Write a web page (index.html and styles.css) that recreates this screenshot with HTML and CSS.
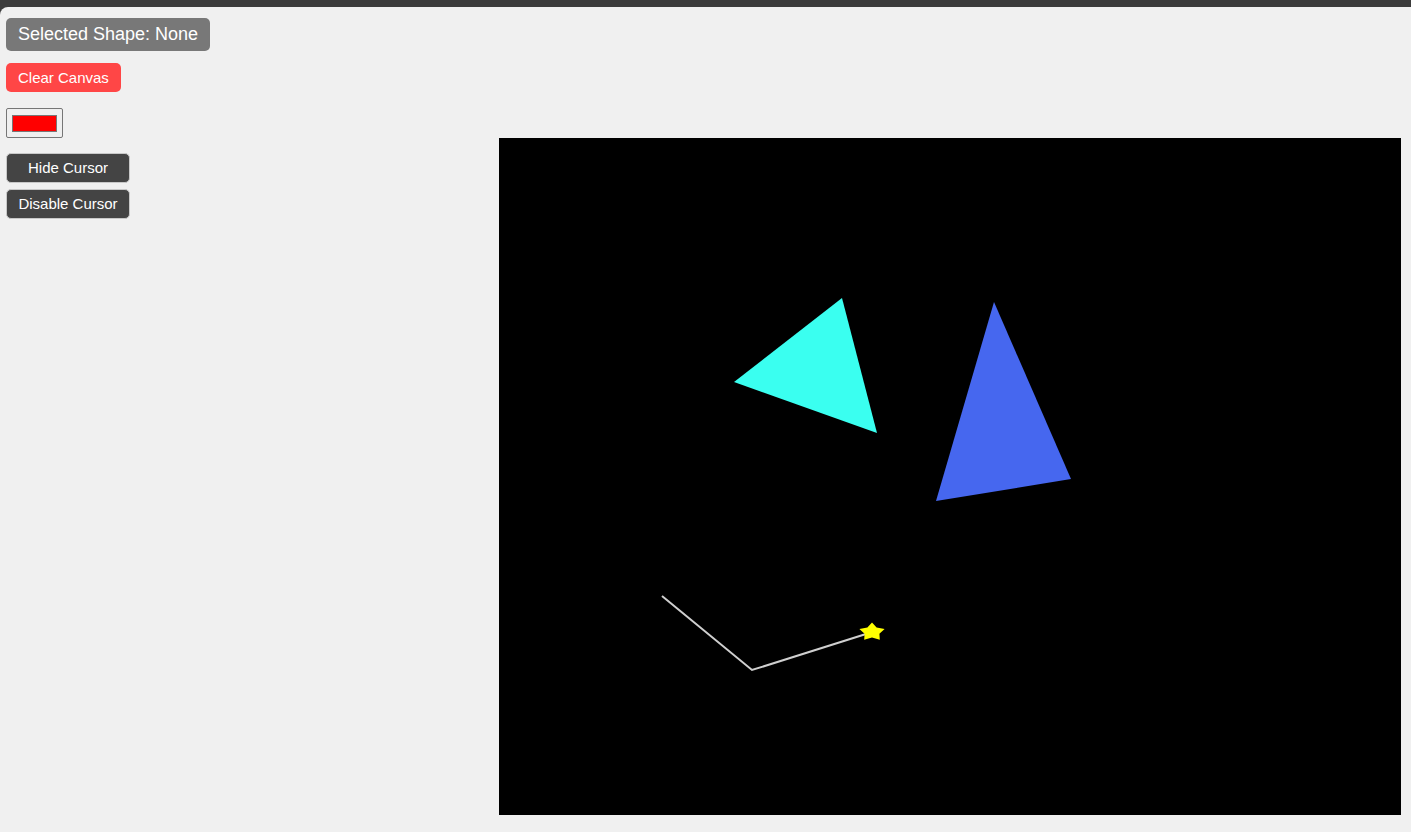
FILE: index.html
```html
<!DOCTYPE html>
<html lang="en">
<head>
<meta charset="utf-8">
<title>Canvas Shapes</title>
<link rel="stylesheet" href="styles.css">
</head>
<body>
<div class="app">
  <div class="controls">
    <div class="selected">Selected Shape: None</div>
    <button class="btn-clear" type="button">Clear Canvas</button>
    <input class="color-pick" type="color" value="#ff0000">
  </div>
  <div class="main">
    <div class="side">
      <button class="btn-dark" type="button">Hide Cursor</button>
      <button class="btn-dark" type="button">Disable Cursor</button>
    </div>
    <svg class="stage" width="902" height="677" viewBox="0 0 902 677" xmlns="http://www.w3.org/2000/svg">
      <rect x="0" y="0" width="902" height="677" fill="#000"/>
      <polygon points="343,160 235,244 378,295" fill="#3afff0"/>
      <polygon points="495,164 572,341 437,363" fill="#4667ef"/>
      <polyline points="163,458 253,532 367,496" fill="none" stroke="#cfcfcf" stroke-width="2"/>
      <polygon transform="translate(373,494)" points="0,-9.6 4.6,-4.5 12.6,-3 7.4,1.8 7.8,7.8 0,5.6 -7.8,7.8 -7.4,1.8 -12.6,-3 -4.6,-4.5" fill="#ffff00"/>
    </svg>
  </div>
</div>
</body>
</html>
```
FILE: styles.css
```css
html {
  background: #3b3b3b;
}
body {
  margin: 0;
  font-family: "Liberation Sans", Arial, sans-serif;
}
.app {
  margin-top: 7px;
  min-height: calc(100vh - 7px);
  box-sizing: border-box;
  background: #f0f0f0;
  border-radius: 8px 0 0 0;
  padding: 11px 6px 0 6px;
}
.controls {
  display: flex;
  flex-direction: column;
  align-items: flex-start;
}
.selected {
  background: #787878;
  color: #fff;
  font-size: 18px;
  padding: 6px 12px;
  border-radius: 5px;
}
.btn-clear {
  margin-top: 12px;
  background: #ff4646;
  color: #fff;
  border: none;
  font-family: inherit;
  font-size: 15px;
  line-height: 17px;
  padding: 6px 12px;
  border-radius: 5px;
}
.color-pick {
  margin: 16px 0 0 0;
  width: 57px;
  height: 30px;
  box-sizing: border-box;
  padding: 6px 5px 5px;
  border: 1px solid #767676;
  border-radius: 2px;
  background: #efefef;
}
.color-pick::-webkit-color-swatch-wrapper {
  padding: 0;
}
.color-pick::-webkit-color-swatch {
  border: 1px solid #777;
  border-radius: 0;
}
.main {
  display: flex;
  align-items: flex-start;
}
.side {
  width: 493px;
  flex: none;
  padding-top: 15px;
  display: flex;
  flex-direction: column;
  align-items: flex-start;
  gap: 6px;
}
.side .btn-dark {
  width: 124px;
}
.btn-dark {
  background: #444;
  color: #fff;
  border: 1px solid #c8c8c8;
  border-radius: 5px;
  font-family: inherit;
  font-size: 15px;
  line-height: 17px;
  padding: 5px 10px 6px;
}
.stage {
  display: block;
  flex: none;
}
```
